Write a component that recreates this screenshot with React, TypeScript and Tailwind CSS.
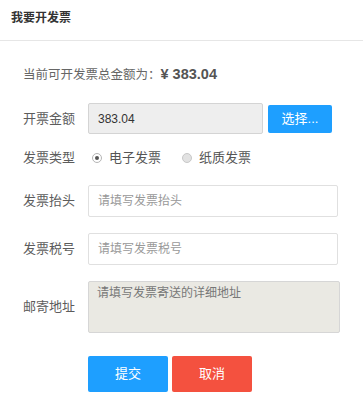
import React from 'react'

const font = { fontFamily: '"Liberation Sans", "Noto Sans CJK SC", sans-serif' }

function Radio({ checked, label }: { checked?: boolean; label: string }) {
  return (
    <label className="flex items-center">
      <span
        className={
          checked
            ? 'flex h-[10px] w-[10px] items-center justify-center rounded-full border border-[#b5b5b5] bg-white'
            : 'h-[10px] w-[10px] rounded-full border border-[#c8c8c8] bg-[#e2e2e2]'
        }
      >
        {checked && <span className="h-[4px] w-[4px] rounded-full bg-[#555]" />}
      </span>
      <span className="ml-[7px] text-[13px] text-[#555]">{label}</span>
    </label>
  )
}

export default function App() {
  return (
    <div className="h-[415px] w-[363px] bg-white" style={font}>
      <div className="flex h-[41px] items-center border-b border-[#e6e6e6] px-[11px] pb-[4px] text-[12px] font-bold text-[#333]">
        我要开发票
      </div>

      <div className="px-[23px]">
        <div className="mt-[24px] flex h-[20px] items-center text-[12.5px] text-[#666]">
          当前可开发票总金额为：
          <span className="text-[14.5px] font-bold text-[#555]">¥ 383.04</span>
        </div>

        <div className="mt-[18px] flex items-center">
          <div className="w-[65px] text-[13px] text-[#5c5c5c]">开票金额</div>
          <div className="flex h-[31px] w-[175px] items-center rounded-[2px] border border-[#d4d4d4] bg-[#eeeeee] px-[9px] text-[12px] text-[#333]">
            383.04
          </div>
          <button className="ml-[5px] h-[28px] w-[64px] rounded-[2px] bg-[#1e9fff] text-[13px] text-white">
            选择...
          </button>
        </div>

        <div className="mt-[14px] flex h-[20px] items-center">
          <div className="w-[65px] text-[13px] text-[#5c5c5c]">发票类型</div>
          <div className="ml-[4px] flex items-center gap-[21px]">
            <Radio checked label="电子发票" />
            <Radio label="纸质发票" />
          </div>
        </div>

        <div className="mt-[17px] flex items-center">
          <div className="w-[65px] text-[13px] text-[#5c5c5c]">发票抬头</div>
          <div className="flex h-[32px] w-[250px] items-center rounded-[2px] border border-[#e0e0e0] bg-white px-[9px] text-[12px] text-[#999]">
            请填写发票抬头
          </div>
        </div>

        <div className="mt-[16px] flex items-center">
          <div className="w-[65px] text-[13px] text-[#5c5c5c]">发票税号</div>
          <div className="flex h-[32px] w-[250px] items-center rounded-[2px] border border-[#e0e0e0] bg-white px-[9px] text-[12px] text-[#999]">
            请填写发票税号
          </div>
        </div>

        <div className="mt-[16px] flex items-center">
          <div className="w-[65px] text-[13px] text-[#5c5c5c]">邮寄地址</div>
          <div className="h-[52px] w-[252px] rounded-[2px] border border-[#d6d6d6] bg-[#eae9e3] px-[8px] pt-[2px] text-[12px] text-[#777]">
            请填写发票寄送的详细地址
          </div>
        </div>

        <div className="mt-[23px] flex gap-[4px] pl-[65px]">
          <button className="h-[36px] w-[80px] rounded-[2px] bg-[#1e9fff] text-[13px] text-white">提交</button>
          <button className="h-[36px] w-[80px] rounded-[2px] bg-[#f4513f] text-[13px] text-white">取消</button>
        </div>
      </div>
    </div>
  )
}
